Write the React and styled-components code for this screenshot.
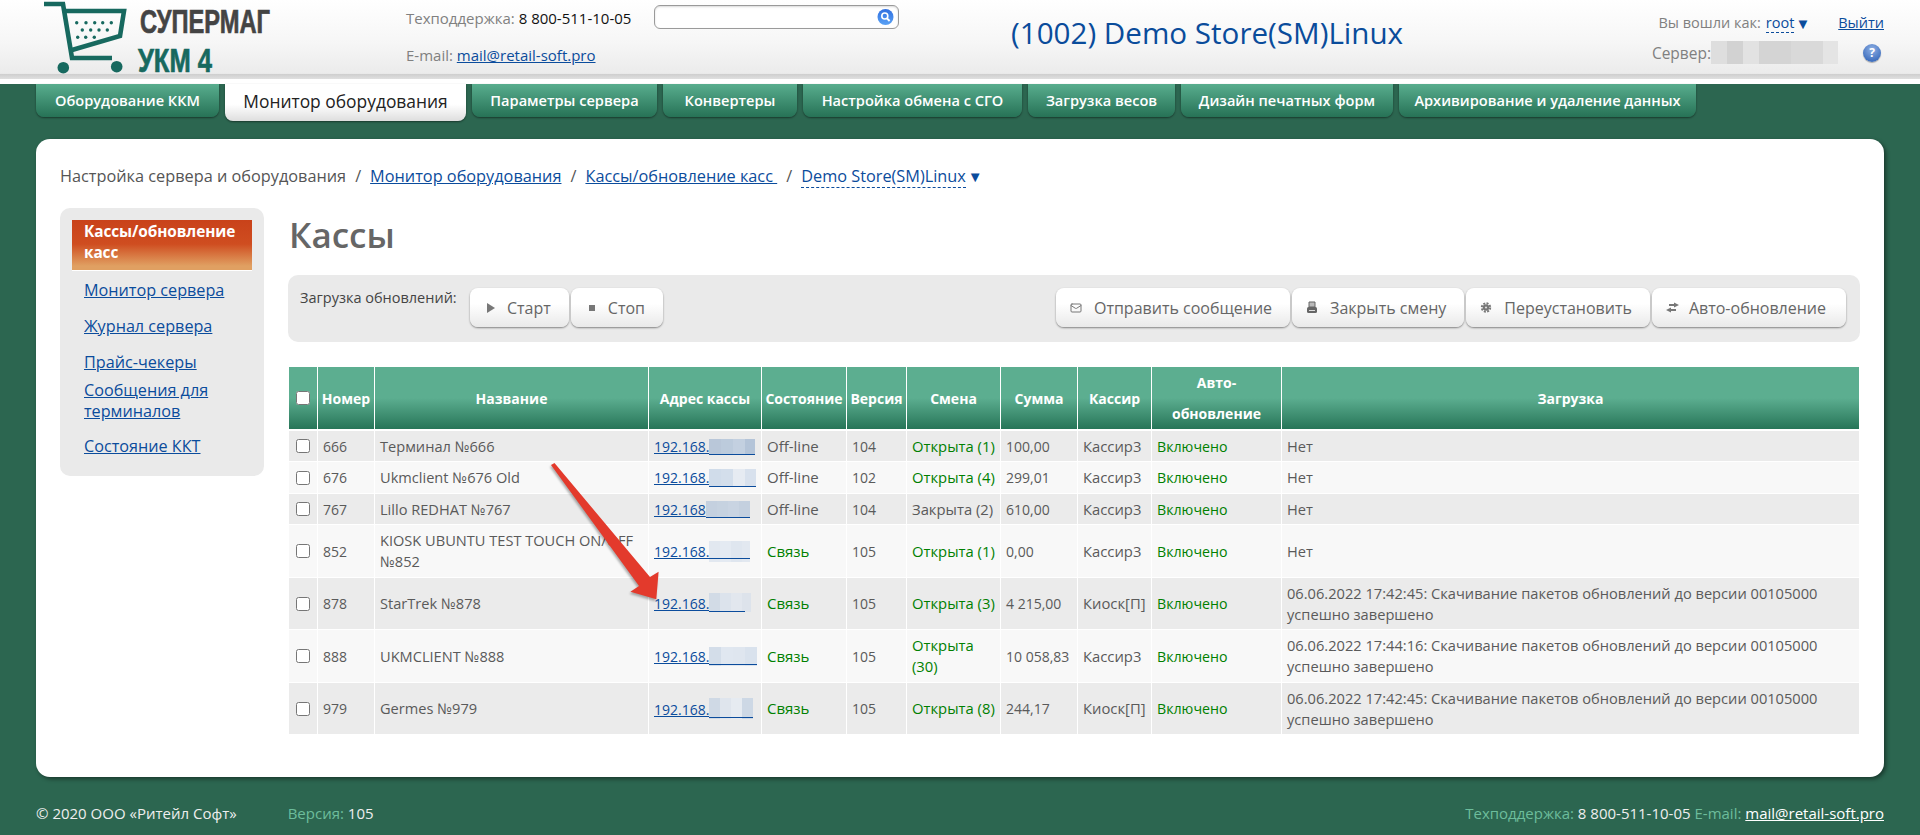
import React from 'react';
import styled, { createGlobalStyle } from 'styled-components';
import { Mail } from 'lucide-react';

const Global = createGlobalStyle`
  html, body { margin: 0; padding: 0; background: #2c6650; }
  body { font-family: "Open Sans", "Liberation Sans", sans-serif; font-size: 14px; color: #555; }
  * { box-sizing: border-box; }
`;

const LINK = '#0b4c9c';
const Page = styled.div`position: relative; width: 1920px; height: 835px; overflow: hidden; background: #2c6650;`;

const Header = styled.header`
  display: grid;
  grid-template-columns: 406px 248px 357px 639px 270px;
  height: 84px;
  border-bottom: 5px solid #fff;
  background: linear-gradient(#fff 0%, #f6f6f6 55%, #ebebeb 93%, #cdcdcd 93.5%, #dfdfdf 100%);
`;
const LogoWrap = styled.div`padding-left: 30px; svg { display: block; }`;
const Contacts = styled.div`display: flex; flex-direction: column; gap: 16px; padding-top: 8px;`;
const ContactLine = styled.div`line-height: 21px; color: #808080; font-size: 15px; white-space: nowrap;`;
const Strong = styled.span`color: #111;`;
const A = styled.a`color: ${LINK}; text-decoration: underline;`;
const SearchCell = styled.div`padding-top: 5px;`;
const Search = styled.div`
  position: relative; width: 245px; height: 24px; border: 1px solid #9a9a9a; border-radius: 6px; background: #fff;
  box-shadow: inset 0 1px 2px rgba(0,0,0,.15);
  svg { position: absolute; right: 4px; top: 2px; }
`;
const StoreTitle = styled.div`padding-top: 14px; font-size: 29.6px; line-height: 38px; color: #0a4c9b; white-space: nowrap;`;
const User = styled.div`display: flex; flex-direction: column; gap: 9px; padding-top: 12px; padding-right: 36px;`;
const UserRow = styled.div`display: flex; justify-content: flex-end; align-items: center; height: 21px; color: #808080; font-size: ${p => p.$fs}px; white-space: nowrap;`;
const RootName = styled.span`margin-left: 5px; color: ${LINK}; border-bottom: 1px dashed ${LINK}; line-height: 19px;`;
const Caret = styled.span`margin: 0 28px 0 1px; color: ${LINK}; font-size: 15px;`;
const ServerMosaic = styled.span`display: block; width: 127px; height: 23px; background: linear-gradient(90deg, #dedede 0 16px, #d2d2d2 16px 32px, #e2e2e2 32px 48px, #d4d4d4 48px 80px, #d9d9d9 80px 112px, #e4e4e4 112px);`;
const HelpIcon = styled.span`
  display: block; width: 18px; height: 18px; margin: 0 3px 0 25px; border-radius: 50%; text-align: center;
  font-size: 12px; line-height: 18px; font-weight: 700; color: #fff;
  background: radial-gradient(circle at 50% 30%, #8fb0e4, #3f6fbe 75%);
  box-shadow: 0 1px 1px rgba(0,0,0,.3);
`;

const Nav = styled.nav`display: flex; align-items: flex-start; gap: 6px; height: 55px; padding: 0 36px;`;
const Tab = styled.div`
  display: flex; align-items: center; justify-content: center; white-space: nowrap;
  height: ${p => p.$active ? 37 : 33}px; width: ${p => p.$w}px; padding-bottom: ${p => p.$active ? 3 : 2}px;
  border-radius: 0 0 8px 8px;
  font-size: ${p => p.$active ? 17.4 : 14.6}px;
  font-weight: ${p => p.$active ? 400 : 600};
  color: ${p => p.$active ? '#222' : '#fff'};
  background: ${p => p.$active ? 'linear-gradient(#fff 55%, #dedede)' : 'linear-gradient(#58ad8e, #277256)'};
  box-shadow: 0 1px 2px rgba(0,0,0,.45);
`;

const Card = styled.main`
  width: 1848px; height: 638px; margin-left: 36px; padding: 24px 24px 0; border-radius: 14px; background: #fff;
  box-shadow: 2px 2px 4px rgba(0,0,0,.45);
`;
const Crumbs = styled.div`display: flex; align-items: center; gap: 9px; height: 26px; font-size: 16.3px; white-space: nowrap;`;
const Crumb = styled.a`color: ${LINK}; text-decoration: underline;`;
const DashedCrumb = styled.a`color: ${LINK}; border-bottom: 1px dashed ${LINK}; line-height: 20px;`;
const CrumbCaret = styled.span`margin-left: 2px; color: ${LINK}; font-size: 15px;`;
const Plain = styled.span`color: #555;`;
const Body = styled.div`display: flex; gap: 24px; margin-top: 19px;`;
const Side = styled.aside`width: 204px; height: 268px; padding: 12px; border-radius: 10px; background: #eaeaea; flex: none;`;
const SideActive = styled.div`
  height: 51px; padding: 1px 0 0 12px; border-bottom: 1px solid #fff; line-height: 21px; font-weight: 700; font-size: 15.4px; color: #fff; letter-spacing: -.1px;
  background: linear-gradient(#c9421a 0%, #cf4d20 48%, #e0a062 92%);
`;
const SideLink = styled.a`display: block; margin-top: ${p => p.$mt}px; padding-left: 12px; line-height: 21px; font-size: 16.2px; color: ${LINK}; text-decoration: underline;`;
const Main = styled.section`flex: 1; min-width: 0; padding-top: 5px;`;
const H1 = styled.h1`margin: 0 0 18px 1px; font-size: 35px; line-height: 44px; font-weight: 600; color: #666;`;
const Toolbar = styled.div`display: flex; align-items: flex-start; height: 67px; padding: 13px 14px 0 12px; border-radius: 10px; background: #eaeaea;`;
const ToolLabel = styled.div`width: 170px; margin-top: -1px; line-height: 21px; font-size: 14.5px; color: #444;`;
const BtnGroup = styled.div`display: flex; gap: 2px; margin-left: ${p => p.$auto ? 'auto' : 0};`;
const Btn = styled.button`
  display: flex; align-items: center; gap: ${p => p.$gap || 11}px; height: 39px; padding: 0 ${p => p.$pr || 18}px 0 ${p => p.$pl || 16}px; border: 0; border-radius: 8px;
  font: 400 16px "Open Sans", sans-serif; color: #666; white-space: nowrap;
  background: linear-gradient(#fff 40%, #e9e9e9);
  box-shadow: 0 1px 2px rgba(0,0,0,.45);
  svg { flex: none; }
`;

const Table = styled.table`width: 1570px; margin: 25px 0 0 1px; border-collapse: separate; border-spacing: 0; table-layout: fixed;`;
const Th = styled.th`
  height: 64px; padding: 0 2px; border-right: 1px solid #fff; border-bottom: 2px solid #fff; line-height: 31px; font-size: 14px; font-weight: 700; color: #fff; text-align: center;
  background: linear-gradient(#5cae90 50%, #277558);
  &:last-child { border-right: 0; }
`;
const Tr = styled.tr`background: ${p => p.$odd ? '#ebebeb' : '#f8f8f8'};`;
const Td = styled.td`
  height: ${p => p.$h}px; padding: 0 2px 0 5px; border-right: 1px solid #fff; border-bottom: 1px solid #fff; line-height: 21px; font-size: ${p => p.$fs || 14}px; vertical-align: middle;
  color: ${p => p.$green ? '#008000' : '#5a5a5a'};
  &:last-child { border-right: 0; }
`;
const CheckTd = styled(Td)`padding: 0 0 3px; text-align: center;`;
const Check = styled.input.attrs({ type: 'checkbox' })`width: 14px; height: 14px; margin: 0; vertical-align: middle;`;
const HeadCheck = styled(Check)`margin-bottom: 4px;`;
const Ip = styled.span`white-space: nowrap; a { color: ${LINK}; text-decoration: underline; }`;
const Mosaic = styled.span`
  display: inline-block; width: ${p => p.$w}px; height: ${p => p.$ht}px; vertical-align: ${p => p.$v}px;
  background: linear-gradient(${LINK}, ${LINK}) 0 ${p => p.$line}px / ${p => p.$ul}px 1px no-repeat, ${p => p.$bg};
`;
const Footer = styled.footer`display: flex; align-items: center; justify-content: space-between; height: 44px; margin-top: 14px; padding: 0 36px; font-size: 15px; color: #eee;`;
const FootLeft = styled.div`display: flex; gap: 51px;`;
const FootLabel = styled.span`color: #6cbd9c;`;
const FootLink = styled.a`color: #fff; text-decoration: underline;`;
const ArrowSvg = styled.svg`position: absolute; left: 540px; top: 455px; filter: drop-shadow(-1px 2px 1px rgba(0,0,0,.3));`;

const Logo = () => (
  <svg width="376" height="78" viewBox="0 0 376 78">
    <g fill="none" stroke="#17695f" strokeWidth="4.6">
      <path d="M14 4H33L42 58H82" />
      <path d="M35 11H94L90 36L42 50" />
    </g>
    <g fill="#17695f">
      {[[46.7,22.7],[56,22.7],[64.7,22.7],[72.7,22.7],[81.3,22.7],[52.3,30],[60.7,30],[69,30],[77.3,30],[47.7,37.3],[55.7,37.3],[64.3,37.3]].map(([x, y]) => <circle key={x + '' + y} cx={x} cy={y} r="1.7" />)}
      <circle cx="33.3" cy="67.7" r="5.8" />
      <circle cx="86.7" cy="66.7" r="5.8" />
    </g>
    <text x="110" y="33" fontFamily="Liberation Sans" fontWeight="700" fontSize="34" fill="#444" stroke="#444" strokeWidth=".7" textLength="130" lengthAdjust="spacingAndGlyphs">СУПЕРМАГ</text>
    <text x="108" y="72" fontFamily="Liberation Sans" fontWeight="700" fontSize="34" fill="#17695f" stroke="#17695f" strokeWidth=".7" textLength="74" lengthAdjust="spacingAndGlyphs">УКМ 4</text>
  </svg>
);
const SearchIcon = () => (
  <svg width="17" height="18" viewBox="0 0 17 18">
    <defs><linearGradient id="sb" x1="0" y1="0" x2="0" y2="1"><stop offset="0" stopColor="#2f6fe0" /><stop offset="1" stopColor="#5aa2f5" /></linearGradient></defs>
    <circle cx="8.5" cy="9" r="8" fill="url(#sb)" />
    <circle cx="7.8" cy="8" r="3" fill="none" stroke="#fff" strokeWidth="1.6" />
    <path d="M10 10.4L12.6 13" stroke="#fff" strokeWidth="2" />
  </svg>
);
const PlayI = () => <svg width="10" height="12" viewBox="0 0 10 12"><path d="M1 1L9 6L1 11Z" fill="#777" /></svg>;
const StopI = () => <svg width="10" height="12" viewBox="0 0 10 12"><rect x="2" y="3" width="6" height="6" fill="#777" /></svg>;
const PrintI = () => <svg width="12" height="13" viewBox="0 0 12 13"><path d="M3 1h6v5H3z" fill="#bbb" stroke="#666" /><rect x="1" y="6" width="10" height="6" rx="1.5" fill="#666" /><path d="M3 9.5h6" stroke="#ddd" /></svg>;
const GearI = () => <svg width="12" height="13" viewBox="0 0 12 13"><circle cx="6" cy="6.5" r="3.2" fill="#777" /><circle cx="6" cy="6.5" r="4.2" fill="none" stroke="#777" strokeWidth="2" strokeDasharray="2 1.3" /><circle cx="6" cy="6.5" r="1.1" fill="#ddd" /></svg>;
const SwapI = () => <svg width="15" height="11" viewBox="0 0 15 11"><path d="M9 0.5L14 3L9 5.5V4H4V2H9Z" fill="#777" /><path d="M6 5.5L1 8L6 10.5V9H11V7H6Z" fill="#777" /></svg>;

const tabs = [
  ['Оборудование ККМ', 183], ['Монитор оборудования', 241, true], ['Параметры сервера', 185], ['Конвертеры', 134],
  ['Настройка обмена с СГО', 219], ['Загрузка весов', 147], ['Дизайн печатных форм', 212], ['Архивирование и удаление данных', 297],
];
const cols = [29, 57, 274, 113, 85, 60, 94, 77, 74, 130, 577];
const stops = (list, step) => 'linear-gradient(90deg,' + list.map((c, i) => `${c} ${i * step}px ${(i + 1) * step}px`).join(',') + ')';
const MSG1 = '06.06.2022 17:42:45: Скачивание пакетов обновлений до версии 00105000 успешно завершено';
const MSG2 = '06.06.2022 17:44:16: Скачивание пакетов обновлений до версии 00105000 успешно завершено';
const rows = [
  { n: '666', name: 'Терминал №666', ip: '192.168.', m: { w: 46, ht: 16, v: -3, line: 15, ul: 46, c: ['#b9c7d9', '#bccbdc', '#c3d0e0', '#b4c4d8'] }, st: 'Off-line', v: '104', sh: 'Открыта (1)', on: true, sum: '100,00', who: 'Кассир3', msg: 'Нет', h: 31 },
  { n: '676', name: 'Ukmclient №676 Old', ip: '192.168.', m: { w: 47, ht: 18, v: -4, line: 17, ul: 47, c: ['#d0dcea', '#d3deeb', '#e6ebf2', '#d8e1ed'] }, st: 'Off-line', v: '102', sh: 'Открыта (4)', on: true, sum: '299,01', who: 'Кассир3', msg: 'Нет', h: 32 },
  { n: '767', name: 'Lillo REDHAT №767', ip: '192.168', m: { w: 44, ht: 17, v: -3, line: 16, ul: 44, c: ['#c4d0df', '#c6d2e0', '#c9d4e2', '#c4d0df'] }, st: 'Off-line', v: '104', sh: 'Закрыта (2)', on: false, sum: '610,00', who: 'Кассир3', msg: 'Нет', h: 31 },
  { n: '852', name: 'KIOSK UBUNTU TEST TOUCH ON/OFF №852', ip: '192.168.', m: { w: 41, ht: 21, v: -5, line: 17, ul: 41, c: ['#e2e8f0', '#e4eaf2', '#dfe6ef', '#e2e8f0'] }, st: 'Связь', stOn: true, v: '105', sh: 'Открыта (1)', on: true, sum: '0,00', who: 'Кассир3', msg: 'Нет', h: 53 },
  { n: '878', name: 'StarTrek №878', ip: '192.168.', m: { w: 42, ht: 19, v: -3, line: 18, ul: 36, c: ['#d2dbe6', '#dce3ec', '#e2e7ee', '#dde3eb'] }, st: 'Связь', stOn: true, v: '105', sh: 'Открыта (3)', on: true, sum: '4 215,00', who: 'Киоск[П]', msg: MSG1, h: 52 },
  { n: '888', name: 'UKMCLIENT №888', ip: '192.168.', m: { w: 48, ht: 19, v: -4, line: 17, ul: 48, c: ['#d3dde9', '#e0e7f0', '#dfe6ef', '#d9e2ed'] }, st: 'Связь', stOn: true, v: '105', sh: 'Открыта (30)', on: true, sum: '10 058,83', who: 'Кассир3', msg: MSG2, h: 53 },
  { n: '979', name: 'Germes №979', ip: '192.168.', m: { w: 44, ht: 21, v: -4, line: 19, ul: 44, c: ['#cfd9e5', '#dfe5ed', '#e6ebf1', '#cdd8e5'] }, st: 'Связь', stOn: true, v: '105', sh: 'Открыта (8)', on: true, sum: '244,17', who: 'Киоск[П]', msg: MSG1, h: 52 },
];

export default function App() {
  return (
    <Page>
      <Global />
      <Header>
        <LogoWrap><Logo /></LogoWrap>
        <Contacts>
          <ContactLine>Техподдержка: <Strong>8 800-511-10-05</Strong></ContactLine>
          <ContactLine>E-mail: <A>mail@retail-soft.pro</A></ContactLine>
        </Contacts>
        <SearchCell><Search><SearchIcon /></Search></SearchCell>
        <StoreTitle>(1002) Demo Store(SM)Linux</StoreTitle>
        <User>
          <UserRow $fs={14.5}>Вы вошли как: <RootName>root</RootName><Caret>▼</Caret><A>Выйти</A></UserRow>
          <UserRow $fs={15.5}>Сервер:<ServerMosaic /><HelpIcon>?</HelpIcon></UserRow>
        </User>
      </Header>
      <Nav>
        {tabs.map(([t, w, a]) => <Tab key={t} $w={w} $active={a}>{t}</Tab>)}
      </Nav>
      <Card>
        <Crumbs>
          <Plain>Настройка сервера и оборудования</Plain><Plain>/</Plain>
          <Crumb>Монитор оборудования</Crumb><Plain>/</Plain>
          <Crumb>Кассы/обновление касс&nbsp;</Crumb><Plain>/</Plain>
          <span><DashedCrumb>Demo Store(SM)Linux</DashedCrumb><CrumbCaret>▼</CrumbCaret></span>
        </Crumbs>
        <Body>
          <Side>
            <SideActive>Кассы/обновление касс</SideActive>
            <SideLink $mt={9}>Монитор сервера</SideLink>
            <SideLink $mt={15}>Журнал сервера</SideLink>
            <SideLink $mt={15}>Прайс-чекеры</SideLink>
            <SideLink $mt={7}>Сообщения для терминалов</SideLink>
            <SideLink $mt={14}>Состояние ККТ</SideLink>
          </Side>
          <Main>
            <H1>Кассы</H1>
            <Toolbar>
              <ToolLabel>Загрузка обновлений:</ToolLabel>
              <BtnGroup>
                <Btn><PlayI />Старт</Btn>
                <Btn><StopI />Стоп</Btn>
              </BtnGroup>
              <BtnGroup $auto>
                <Btn $pl={14} $gap={12}><Mail size={12} color="#777" />Отправить сообщение</Btn>
                <Btn $pl={14} $gap={12}><PrintI />Закрыть смену</Btn>
                <Btn $pl={14} $gap={12}><GearI />Переустановить</Btn>
                <Btn $pl={13} $gap={9} $pr={20}><SwapI />Авто-обновление</Btn>
              </BtnGroup>
            </Toolbar>
            <Table>
              <colgroup>{cols.map((w, i) => <col key={i} width={w} />)}</colgroup>
              <thead>
                <tr>
                  <Th><HeadCheck /></Th><Th>Номер</Th><Th>Название</Th><Th>Адрес кассы</Th><Th>Состояние</Th><Th>Версия</Th><Th>Смена</Th><Th>Сумма</Th><Th>Кассир</Th><Th>Авто-<br />обновление</Th><Th>Загрузка</Th>
                </tr>
              </thead>
              <tbody>
                {rows.map((r, i) => (
                  <Tr key={r.n} $odd={i % 2 === 0}>
                    <CheckTd $h={r.h}><Check /></CheckTd>
                    <Td>{r.n}</Td>
                    <Td $fs={14.6}>{r.name}</Td>
                    <Td><Ip><a>{r.ip}</a><Mosaic $w={r.m.w} $ht={r.m.ht} $v={r.m.v} $line={r.m.line} $ul={r.m.ul} $bg={stops(r.m.c, Math.ceil(r.m.w / 4))} /></Ip></Td>
                    <Td $green={r.stOn} $fs={15}>{r.st}</Td>
                    <Td>{r.v}</Td>
                    <Td $green={r.on} $fs={14.8}>{r.sh}</Td>
                    <Td>{r.sum}</Td>
                    <Td $fs={14.8}>{r.who}</Td>
                    <Td $green $fs={14.2}>Включено</Td>
                    <Td $fs={14.65}>{r.msg}</Td>
                  </Tr>
                ))}
              </tbody>
            </Table>
          </Main>
        </Body>
      </Card>
      <Footer>
        <FootLeft>
          <span>© 2020 ООО «Ритейл Софт»</span>
          <span><FootLabel>Версия:</FootLabel> 105</span>
        </FootLeft>
        <div>
          <FootLabel>Техподдержка:</FootLabel> 8 800-511-10-05 <FootLabel>E-mail:</FootLabel> <FootLink>mail@retail-soft.pro</FootLink>
        </div>
      </Footer>
      <ArrowSvg width="130" height="150" viewBox="540 455 130 150">
        <path d="M551 465L554.5 463L650 577L658.6 571.7L656.3 599.3L630.4 591.7L639 586Z" fill="#e33a2c" />
      </ArrowSvg>
    </Page>
  );
}
